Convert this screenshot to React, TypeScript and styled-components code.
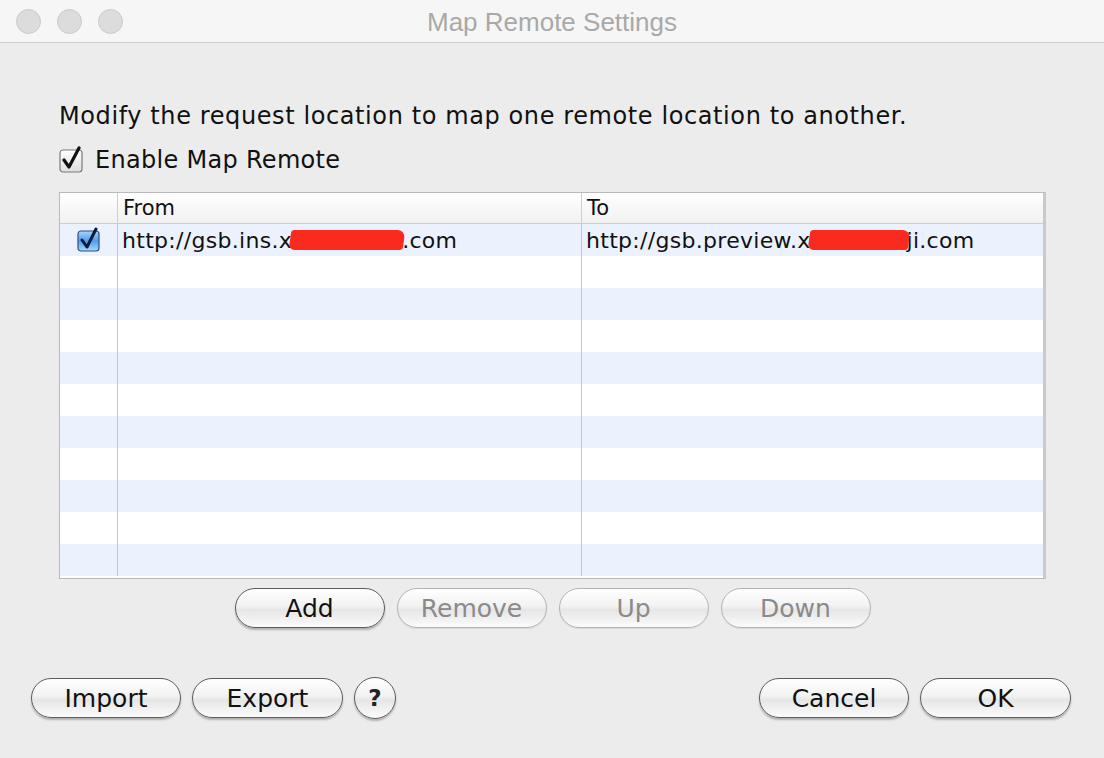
import React from "react";
import styled, { createGlobalStyle } from "styled-components";

const Global = createGlobalStyle`
  html, body {
    margin: 0;
    padding: 0;
    background: #ececec;
  }
  body {
    font-family: "DejaVu Sans", "Liberation Sans", sans-serif;
    color: #111;
  }
`;

const Window = styled.div`
  width: 1104px;
  height: 758px;
  display: flex;
  flex-direction: column;
  background: #ececec;
  overflow: hidden;
`;

const TitleBar = styled.div`
  position: relative;
  height: 42px;
  flex-shrink: 0;
  display: flex;
  align-items: center;
  justify-content: center;
  background: #f6f6f6;
  border-bottom: 1px solid #cfcfcf;
`;

const Lights = styled.div`
  position: absolute;
  left: 16px;
  top: 9px;
  display: flex;
  gap: 16px;
`;

const Light = styled.span`
  width: 23px;
  height: 23px;
  border-radius: 50%;
  background: #dcdcdc;
  border: 1px solid #cbcbcb;
`;

const Title = styled.div`
  font-family: "Liberation Sans", "Inter", sans-serif;
  font-size: 26px;
  color: #a9a9a9;
  margin-top: 2px;
`;

const Body = styled.div`
  flex: 1;
  display: flex;
  flex-direction: column;
  padding: 58px 58px 0 59px;
`;

const Description = styled.div`
  font-size: 24px;
  letter-spacing: 0.6px;
  line-height: 30px;
  height: 30px;
`;

const CheckRow = styled.label`
  margin-top: 14px;
  height: 30px;
  display: flex;
  align-items: center;
  gap: 10px;
  font-size: 24px;
  letter-spacing: 0.3px;
`;

const Table = styled.div`
  margin-top: 17px;
  height: 385px;
  border: 1px solid #b9b9b9;
  border-right: 3px solid #c9c9c9;
  display: flex;
  flex-direction: column;
  background: #fff;
`;

const HeaderRow = styled.div`
  height: 30px;
  flex-shrink: 0;
  display: grid;
  grid-template-columns: 57px 464px 1fr;
  background: linear-gradient(#ffffff, #f1f1f1);
  border-bottom: 1px solid #cdcdcd;
`;

const HeaderCell = styled.div<{ first?: boolean }>`
  display: flex;
  align-items: center;
  padding-left: 5px;
  font-size: 21px;
  border-left: ${(p) => (p.first ? "none" : "1px solid #cfcfcf")};
`;

const Row = styled.div<{ striped: boolean }>`
  height: 32px;
  flex-shrink: 0;
  display: grid;
  grid-template-columns: 57px 464px 1fr;
  background: ${(p) => (p.striped ? "#ecf2fd" : "#ffffff")};
`;

const Cell = styled.div<{ first?: boolean }>`
  display: flex;
  align-items: center;
  justify-content: ${(p) => (p.first ? "center" : "flex-start")};
  padding-left: ${(p) => (p.first ? "0" : "4px")};
  font-size: 22px;
  letter-spacing: 0.3px;
  border-left: ${(p) => (p.first ? "none" : "1px solid #c3c6cc")};
  white-space: nowrap;
  overflow: hidden;
`;

const Redact = styled.span<{ w: number }>`
  display: inline-block;
  width: ${(p) => p.w}px;
  height: 20px;
  background: #fb2a1e;
  border-radius: 3px 8px 3px 6px;
  transform: skewX(-8deg);
  margin: 0 -2px;
`;

const ButtonRow = styled.div`
  margin-top: 9px;
  display: flex;
  justify-content: center;
  gap: 12px;
`;

const Pill = styled.button<{ disabled?: boolean; w?: number }>`
  width: ${(p) => p.w ?? 150}px;
  height: 40px;
  border-radius: 20px;
  border: 1.5px solid ${(p) => (p.disabled ? "#b4b4b4" : "#5c5c5c")};
  background: linear-gradient(#ffffff 0%, #f2f2f2 45%, #e6e6e6 55%, #fbfbfb 100%);
  box-shadow: ${(p) => (p.disabled ? "0 1px 1px rgba(0,0,0,0.08)" : "0 2px 2px rgba(0,0,0,0.25)")};
  font-family: "DejaVu Sans", sans-serif;
  font-size: 25px;
  color: ${(p) => (p.disabled ? "#8a8a8a" : "#111")};
  padding: 0;
  display: flex;
  align-items: center;
  justify-content: center;
`;

const Help = styled.button`
  width: 42px;
  height: 42px;
  border-radius: 50%;
  border: 1.5px solid #5c5c5c;
  background: linear-gradient(#ffffff 0%, #f2f2f2 45%, #e6e6e6 55%, #fbfbfb 100%);
  box-shadow: 0 2px 2px rgba(0,0,0,0.25);
  font-family: "DejaVu Sans", sans-serif;
  font-size: 23px;
  font-weight: bold;
  color: #222;
  padding: 0;
`;

const Footer = styled.div`
  margin: 49px -25px 0 -28px;
  display: flex;
  justify-content: space-between;
  align-items: center;
`;

const Group = styled.div`
  display: flex;
  align-items: center;
  gap: 11px;
`;

const PlainCheck = () => (
  <svg width="26" height="28" viewBox="0 0 26 28">
    <defs>
      <linearGradient id="pc" x1="0" y1="0" x2="0" y2="1">
        <stop offset="0" stopColor="#ffffff" />
        <stop offset="1" stopColor="#dedede" />
      </linearGradient>
    </defs>
    <rect x="1" y="4" width="22" height="22" rx="3" fill="url(#pc)" stroke="#7a7a7a" strokeWidth="1.2" />
    <path d="M5 14 L10 21 L20 2" fill="none" stroke="#111" strokeWidth="3.2" strokeLinecap="round" strokeLinejoin="round" />
  </svg>
);

const BlueCheck = () => (
  <svg width="24" height="26" viewBox="0 0 24 26">
    <defs>
      <linearGradient id="bc" x1="0" y1="0" x2="0" y2="1">
        <stop offset="0" stopColor="#a9d3fb" />
        <stop offset="0.5" stopColor="#4c9df0" />
        <stop offset="1" stopColor="#a6dafd" />
      </linearGradient>
    </defs>
    <rect x="1" y="4" width="21" height="20" rx="3" fill="url(#bc)" stroke="#2b4f86" strokeWidth="1.2" />
    <path d="M5 13 L10 20 L19 2" fill="none" stroke="#0b1a33" strokeWidth="3" strokeLinecap="round" strokeLinejoin="round" />
  </svg>
);

export default function App() {
  const empty = Array.from({ length: 10 }, (_, i) => i);
  return (
    <Window>
      <Global />
      <TitleBar>
        <Lights>
          <Light />
          <Light />
          <Light />
        </Lights>
        <Title>Map Remote Settings</Title>
      </TitleBar>
      <Body>
        <Description>Modify the request location to map one remote location to another.</Description>
        <CheckRow>
          <PlainCheck />
          Enable Map Remote
        </CheckRow>
        <Table>
          <HeaderRow>
            <HeaderCell first />
            <HeaderCell>From</HeaderCell>
            <HeaderCell>To</HeaderCell>
          </HeaderRow>
          <Row striped>
            <Cell first>
              <BlueCheck />
            </Cell>
            <Cell>
              http://gsb.ins.x<Redact w={114} />.com
            </Cell>
            <Cell>
              http://gsb.preview.x<Redact w={100} />ji.com
            </Cell>
          </Row>
          {empty.map((i) => (
            <Row key={i} striped={i % 2 === 1}>
              <Cell first />
              <Cell />
              <Cell />
            </Row>
          ))}
        </Table>
        <ButtonRow>
          <Pill>Add</Pill>
          <Pill disabled>Remove</Pill>
          <Pill disabled>Up</Pill>
          <Pill disabled>Down</Pill>
        </ButtonRow>
        <Footer>
          <Group>
            <Pill>Import</Pill>
            <Pill w={151}>Export</Pill>
            <Help>?</Help>
          </Group>
          <Group>
            <Pill>Cancel</Pill>
            <Pill w={151}>OK</Pill>
          </Group>
        </Footer>
      </Body>
    </Window>
  );
}
